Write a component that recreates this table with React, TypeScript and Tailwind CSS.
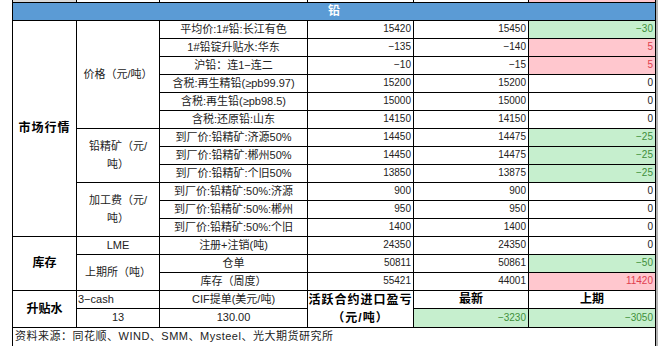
import React from "react";

type Tone = "green" | "red" | undefined;

const cell = "border border-black p-0";
const num = `${cell} text-right pr-[2px] text-[10px]`;
const label = `${cell} text-center text-[11px]`;

function Diff({ value, tone }: { value: string; tone?: Tone }) {
  const color =
    tone === "green"
      ? "bg-[#c6efce] text-[#3f8f3a]"
      : tone === "red"
        ? "bg-[#ffc7ce] text-[#e0404e]"
        : "text-[#222]";
  return <td className={`${num} ${color}`}>{value}</td>;
}

const priceRows: [string, string, string, string, Tone][] = [
  ["平均价:1#铅:长江有色", "15420", "15450", "−30", "green"],
  ["1#铅锭升贴水:华东", "−135", "−140", "5", "red"],
  ["沪铅：连1−连二", "−10", "−15", "5", "red"],
  ["含税:再生精铅(≥pb99.97)", "15200", "15200", "0", undefined],
  ["含税:再生铅(≥pb98.5)", "15000", "15000", "0", undefined],
  ["含税:还原铅:山东", "14150", "14150", "0", undefined],
];

const oreRows: [string, string, string, string, Tone][] = [
  ["到厂价:铅精矿:济源50%", "14450", "14475", "−25", "green"],
  ["到厂价:铅精矿:郴州50%", "14450", "14475", "−25", "green"],
  ["到厂价:铅精矿:个旧50%", "13850", "13875", "−25", "green"],
];

const feeRows: [string, string, string, string, Tone][] = [
  ["到厂价:铅精矿:50%:济源", "900", "900", "0", undefined],
  ["到厂价:铅精矿:50%:郴州", "950", "950", "0", undefined],
  ["到厂价:铅精矿:50%:个旧", "1400", "1400", "0", undefined],
];

export default function App() {
  return (
    <div className="h-[346px] w-[667px] overflow-hidden bg-white pl-[12px] font-['Liberation_Sans','Noto_Sans_CJK_SC',sans-serif] text-[#222]">
      <div className="w-[646px] border-r-[3px] border-[#b4b4b4]">
        <table className="w-[643px] table-fixed border-collapse leading-none">
          <colgroup>
            <col className="w-[64px]" />
            <col className="w-[83px]" />
            <col className="w-[148px]" />
            <col className="w-[106px]" />
            <col className="w-[115px]" />
            <col className="w-[127px]" />
          </colgroup>
          <tbody>
            <tr className="h-[2px]">
              <td className="border-x border-b border-black bg-[#d9d9d9] p-0" />
              <td className="border-x border-b border-black p-0" />
              <td className="border-x border-b border-black p-0" />
              <td className="border-x border-b border-black p-0" />
              <td className="border-x border-b border-black p-0" />
              <td className="border-x border-b border-black bg-[#ffc7ce] p-0" />
            </tr>
            <tr className="h-[18px]">
              <td
                colSpan={6}
                className={`${cell} bg-[#5b9bd5] text-center text-[12px] font-bold text-white`}
              >
                铅
              </td>
            </tr>
            {priceRows.map(([name, a, b, d, tone], i) => (
              <tr key={name} className="h-[18px]">
                {i === 0 && (
                  <td rowSpan={12} className={`${label} text-[12px] font-bold tracking-[1px] text-black`}>
                    市场行情
                  </td>
                )}
                {i === 0 && (
                  <td rowSpan={6} className={label}>
                    价格（元/吨）
                  </td>
                )}
                <td className={label}>{name}</td>
                <td className={num}>{a}</td>
                <td className={num}>{b}</td>
                <Diff value={d} tone={tone} />
              </tr>
            ))}
            {oreRows.map(([name, a, b, d, tone], i) => (
              <tr key={name} className="h-[18px]">
                {i === 0 && (
                  <td rowSpan={3} className={`${label} leading-[18px]`}>
                    铅精矿（元/
                    <br />
                    吨）
                  </td>
                )}
                <td className={label}>{name}</td>
                <td className={num}>{a}</td>
                <td className={num}>{b}</td>
                <Diff value={d} tone={tone} />
              </tr>
            ))}
            {feeRows.map(([name, a, b, d, tone], i) => (
              <tr key={name} className="h-[18px]">
                {i === 0 && (
                  <td rowSpan={3} className={`${label} leading-[18px]`}>
                    加工费（元/
                    <br />
                    吨）
                  </td>
                )}
                <td className={label}>{name}</td>
                <td className={num}>{a}</td>
                <td className={num}>{b}</td>
                <Diff value={d} tone={tone} />
              </tr>
            ))}

            {/* 库存 */}
            <tr className="h-[18px]">
              <td rowSpan={3} className={`${label} text-[12px] font-bold text-black`}>
                库存
              </td>
              <td className={label}>LME</td>
              <td className={label}>注册+注销(吨)</td>
              <td className={num}>24350</td>
              <td className={num}>24350</td>
              <Diff value="0" />
            </tr>
            <tr className="h-[18px]">
              <td rowSpan={2} className={label}>
                上期所（吨）
              </td>
              <td className={label}>仓单</td>
              <td className={num}>50811</td>
              <td className={num}>50861</td>
              <Diff value="−50" tone="green" />
            </tr>
            <tr className="h-[18px]">
              <td className={label}>库存（周度）</td>
              <td className={num}>55421</td>
              <td className={num}>44001</td>
              <Diff value="11420" tone="red" />
            </tr>

            {/* 升贴水 */}
            <tr className="h-[18px]">
              <td rowSpan={2} className={`${label} text-[12px] font-bold text-black`}>
                升贴水
              </td>
              <td className={`${cell} pl-[1px] text-left text-[11px]`}>3−cash</td>
              <td className={label}>CIF提单(美元/吨)</td>
              <td
                rowSpan={2}
                className={`${label} text-[12px] font-bold leading-[18px] tracking-[1px] text-black`}
              >
                活跃合约进口盈亏
                <br />
                （元/吨）
              </td>
              <td className={`${label} text-[12px] font-bold text-black`}>最新</td>
              <td className={`${label} text-[12px] font-bold text-black`}>上期</td>
            </tr>
            <tr className="h-[18px]">
              <td className={label}>13</td>
              <td className={label}>130.00</td>
              <Diff value="−3230" tone="green" />
              <Diff value="−3050" tone="green" />
            </tr>

            <tr className="h-[19px]">
              <td colSpan={6} className={`${cell} pl-[2px] text-left text-[11px] tracking-[0.5px]`}>
                资料来源：同花顺、WIND、SMM、Mysteel、光大期货研究所
              </td>
            </tr>
          </tbody>
        </table>
      </div>
    </div>
  );
}
